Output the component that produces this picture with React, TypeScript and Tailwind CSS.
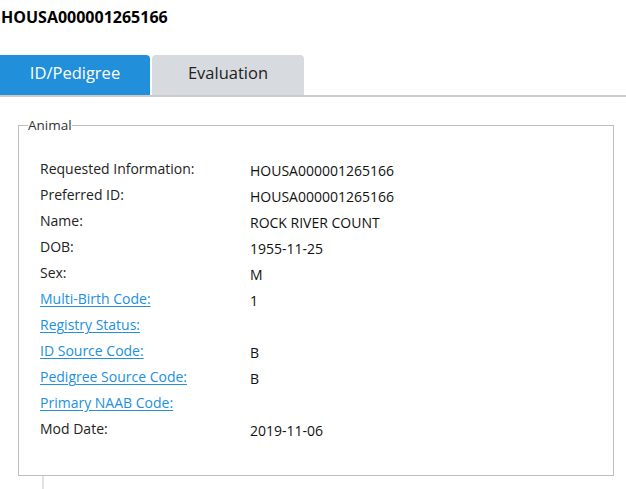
import React from "react";

type Row = { label: string; value: string; link?: boolean };

const rows: Row[] = [
  { label: "Requested Information:", value: "HOUSA000001265166" },
  { label: "Preferred ID:", value: "HOUSA000001265166" },
  { label: "Name:", value: "ROCK RIVER COUNT" },
  { label: "DOB:", value: "1955-11-25" },
  { label: "Sex:", value: "M" },
  { label: "Multi-Birth Code:", value: "1", link: true },
  { label: "Registry Status:", value: "", link: true },
  { label: "ID Source Code:", value: "B", link: true },
  { label: "Pedigree Source Code:", value: "B", link: true },
  { label: "Primary NAAB Code:", value: "", link: true },
  { label: "Mod Date:", value: "2019-11-06" },
];

const App = () => {
  return (
    <div className="w-[626px] h-[489px] overflow-hidden bg-white text-[#222] font-['Open_Sans','Noto_Sans',sans-serif]">
      <h1 className="pt-[7px] pl-[1px] text-[16px] font-bold leading-[20px] text-black">HOUSA000001265166</h1>

      {/* tabs */}
      <div className="mt-[28px] flex gap-[2px] border-b-2 border-[#cbcbcb]">
        <div className="w-[150px] h-[40px] pb-[3px] flex items-center justify-center rounded-tr-[4px] bg-[#228fdb] text-white text-[16.5px]">
          ID/Pedigree
        </div>
        <div className="w-[152px] h-[40px] pb-[3px] flex items-center justify-center rounded-t-[4px] bg-[#d7dbdf] text-[#222] text-[16.5px]">
          Evaluation
        </div>
      </div>

      <fieldset className="mt-[20px] ml-[18px] mr-[12px] h-[359px] border border-[#bdbdbd] pl-[21px] pr-4 pt-[25px]">
        <legend className="-ml-[12px] px-0 text-[13.5px] leading-[16px] text-[#333]">Animal</legend>
        <div className="grid grid-cols-[210px_1fr] text-[14px]">
          {rows.map((r) => (
            <React.Fragment key={r.label}>
              <div className="h-[26px] leading-[22px]">
                {r.link ? (
                  <a href="#" className="text-[#2290df] underline underline-offset-2">
                    {r.label}
                  </a>
                ) : (
                  r.label
                )}
              </div>
              <div className="h-[26px] leading-[26px] text-[#111]">{r.value}</div>
            </React.Fragment>
          ))}
        </div>
      </fieldset>
      <div className="ml-[42px] w-[2px] h-[14px] bg-[#e2e2e2]" />
    </div>
  );
};

export default App;
